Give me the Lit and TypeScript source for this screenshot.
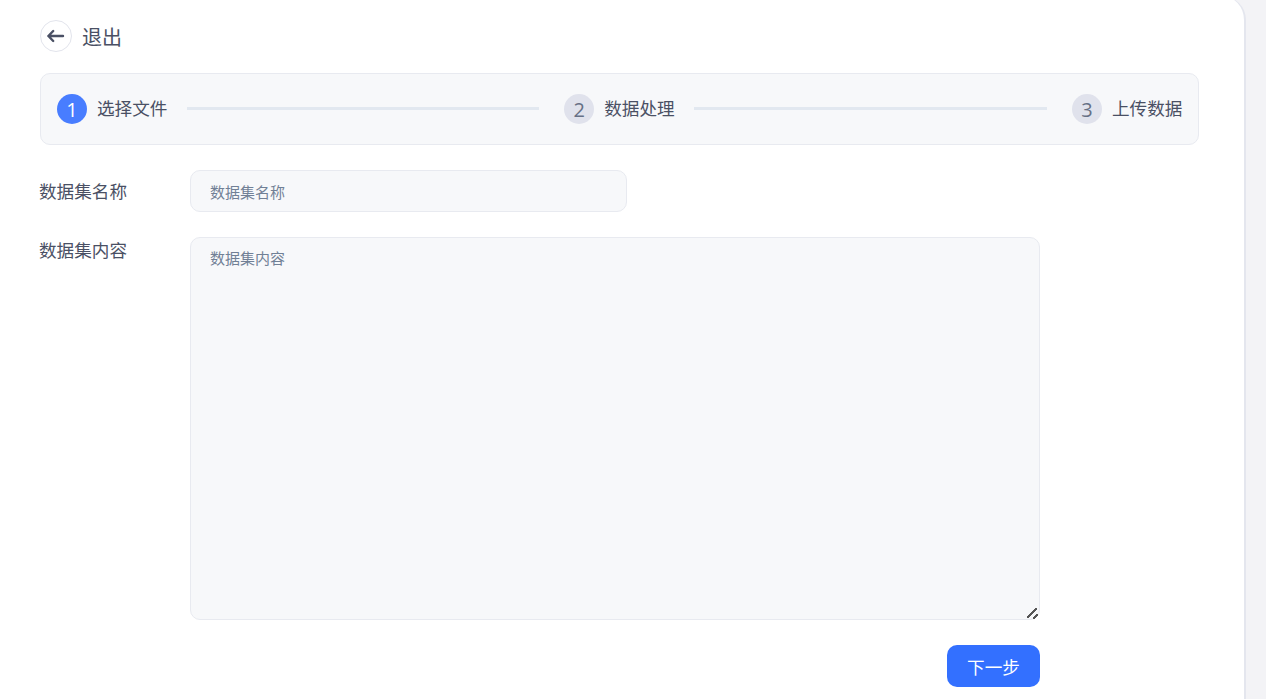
import { LitElement, html, css } from 'lit'
import { customElement } from 'lit/decorators.js'
import { classMap } from 'lit/directives/class-map.js'

const steps = ['选择文件', '数据处理', '上传数据']

@customElement('app-root')
export class AppRoot extends LitElement {
  static styles = css`
    :host {
      display: block;
      height: 699px;
      overflow: hidden;
      background: #f3f3f6;
      font-family: 'Noto Sans CJK SC', 'Noto Sans', sans-serif;
      color: #4a5064;
    }

    .card {
      box-sizing: border-box;
      width: 1246px;
      height: 720px;
      margin-top: -4px;
      padding: 24px 45px 0 40px;
      background: #fff;
      border-right: 2px solid #e4e6ee;
      border-radius: 0 24px 0 0;
    }

    .back {
      display: flex;
      align-items: center;
      gap: 10px;
      height: 33px;
      font-size: 20px;
    }

    .back-btn {
      box-sizing: border-box;
      display: flex;
      align-items: center;
      justify-content: center;
      width: 32px;
      height: 32px;
      margin-bottom: 1px;
      border: 1px solid #e2e4ec;
      border-radius: 50%;
      background: #fff;
    }

    .steps {
      box-sizing: border-box;
      display: flex;
      align-items: center;
      height: 72px;
      margin-top: 20px;
      padding: 0 15px 0 16px;
      background: #f7f8fa;
      border: 1px solid #e8eaf0;
      border-radius: 10px;
    }

    .step {
      display: flex;
      align-items: center;
      gap: 10px;
      font-size: 17.6px;
      white-space: nowrap;
    }

    .step:last-child {
      margin-left: 0.5px;
    }

    .step span {
      width: 71px;
      margin-top: -3px;
    }

    .num {
      display: flex;
      align-items: center;
      justify-content: center;
      width: 30px;
      height: 30px;
      border-radius: 50%;
      background: #e0e2ec;
      color: #667085;
      font-family: 'Open Sans', sans-serif;
      font-size: 20px;
    }

    .num.active {
      background: #487dff;
      color: #fff;
    }

    .line {
      flex: 1;
      height: 3px;
      margin: 0 25px 1px 19px;
      background: #e2e8f0;
    }

    .row {
      display: flex;
      align-items: flex-start;
      margin-top: 25px;
    }

    .label {
      box-sizing: border-box;
      flex: none;
      width: 151px;
      margin-left: -1px;
      font-size: 17.6px;
      line-height: 42px;
    }

    .multi .label {
      line-height: 26px;
    }

    input,
    textarea {
      box-sizing: border-box;
      display: block;
      padding: 0 19px;
      background: #f7f8fa;
      border: 1px solid #e8eaf0;
      border-radius: 10px;
      font-family: inherit;
      font-size: 15px;
      color: #4a5064;
      outline: none;
    }

    input::placeholder,
    textarea::placeholder {
      color: #718096;
      opacity: 1;
    }

    input {
      width: 437px;
      height: 42px;
    }

    textarea {
      width: 850px;
      height: 383px;
      padding-top: 8px;
      line-height: 24px;
    }

    textarea::-webkit-resizer {
      background-image: linear-gradient(135deg, transparent 43%, #555 43% 57%, transparent 57%),
        linear-gradient(135deg, transparent 36%, #555 36% 64%, transparent 64%);
      background-size: 10px 10px, 5px 5px;
      background-position: 3px 4px, 9px 10px;
      background-repeat: no-repeat;
    }

    .actions {
      display: flex;
      justify-content: flex-end;
      width: 1000px;
      margin-top: 25px;
    }

    .next {
      width: 93px;
      height: 42px;
      padding: 0;
      border: none;
      border-radius: 10px;
      background: #3370ff;
      color: #fff;
      font-family: inherit;
      font-size: 17.6px;
    }
  `

  renderStep(name: string, i: number) {
    return html`
      ${i > 0 ? html`<div class="line"></div>` : ''}
      <div class="step">
        <div class=${classMap({ num: true, active: i === 0 })}>${i + 1}</div>
        <span>${name}</span>
      </div>
    `
  }

  render() {
    return html`
      <div class="card">
        <div class="back">
          <div class="back-btn">
            <svg width="20" height="20" viewBox="0 0 20 20" fill="none" stroke="#4a5064" stroke-width="2.4" stroke-linecap="round" stroke-linejoin="round">
              <path d="M17 10H2.4M7.2 5L2.4 10 7.2 15" />
            </svg>
          </div>
          <span>退出</span>
        </div>
        <div class="steps">${steps.map((s, i) => this.renderStep(s, i))}</div>
        <div class="row">
          <div class="label">数据集名称</div>
          <input placeholder="数据集名称" />
        </div>
        <div class="row multi">
          <div class="label">数据集内容</div>
          <textarea placeholder="数据集内容"></textarea>
        </div>
        <div class="actions"><button class="next">下一步</button></div>
      </div>
    `
  }
}
